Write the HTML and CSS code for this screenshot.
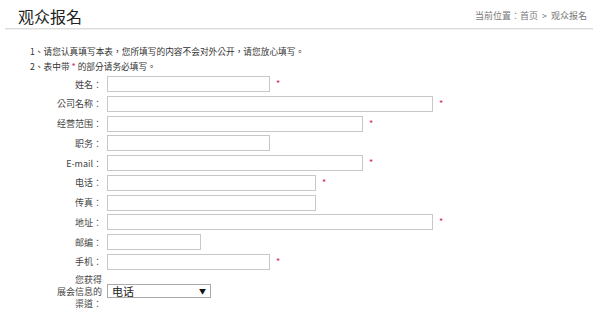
FILE: index.html
```html
<!DOCTYPE html>
<html>
<head>
    <meta charset="UTF-8">
    <title>观众报名</title>
    <link rel="stylesheet" href="styles.css">
</head>
<body>
    <div class="head">
        <h1>观众报名</h1>
        <div class="crumb">当前位置：首页 &gt; 观众报名</div>
    </div>
    <div class="main">
        <p class="note">1、请您认真填写本表，您所填写的内容不会对外公开，请您放心填写。</p>
        <p class="note">2、表中带 <span class="star">*</span> 的部分请务必填写。</p>

        <form class="reg">
            <div class="row">
                <label>姓名：</label>
                <input type="text" class="w163">
                <span class="star">*</span>
            </div>
            <div class="row">
                <label>公司名称：</label>
                <input type="text" class="w326">
                <span class="star">*</span>
            </div>
            <div class="row">
                <label>经营范围：</label>
                <input type="text" class="w256">
                <span class="star">*</span>
            </div>
            <div class="row">
                <label>职务：</label>
                <input type="text" class="w163">
            </div>
            <div class="row">
                <label>E-mail：</label>
                <input type="text" class="w256">
                <span class="star">*</span>
            </div>
            <div class="row">
                <label>电话：</label>
                <input type="text" class="w209">
                <span class="star">*</span>
            </div>
            <div class="row">
                <label>传真：</label>
                <input type="text" class="w209">
            </div>
            <div class="row">
                <label>地址：</label>
                <input type="text" class="w326">
                <span class="star">*</span>
            </div>
            <div class="row">
                <label>邮编：</label>
                <input type="text" class="w94">
            </div>
            <div class="row">
                <label>手机：</label>
                <input type="text" class="w163">
                <span class="star">*</span>
            </div>
            <div class="row">
                <label class="multi">您获得<br>展会信息的<br>渠道：</label>
                <span class="pick">
                    <select>
                        <option>电话</option>
                        <option>网站</option>
                        <option>朋友介绍</option>
                    </select>
                </span>
            </div>
        </form>
    </div>
</body>
</html>
```

FILE: styles.css
```css
body {
    margin: 0;
    background: #fff;
    color: #333;
    font-family: "Noto Sans CJK TC", "Noto Sans CJK SC", sans-serif;
    font-size: 9px;
}

.head {
    margin: 0 7px 0 5px;
    height: 24px;
    padding: 4px 6px 0 13px;
    display: flex;
    justify-content: space-between;
    align-items: center;
    border-bottom: 1px solid #dcdcdc;
    box-shadow: 0 1px 0 #f0f0f0;
}

.head h1 {
    margin: 0;
    font-size: 16px;
    font-weight: normal;
    color: #222;
    line-height: 24px;
}

.crumb {
    color: #777;
    font-size: 9px;
    margin-top: -2px;
    word-spacing: 2px;
}

.main {
    padding: 15px 0 0 30px;
}

.note {
    margin: 0;
    line-height: 15px;
    font-size: 8.7px;
}

.star {
    color: #d0245a;
    font-size: 9px;
}

.reg {
    margin: 2px 0 0 27px;
}

.row {
    display: flex;
    align-items: center;
    margin-bottom: 3.75px;
}

.row label {
    width: 45px;
    margin-right: 5px;
    text-align: right;
    color: #444;
    white-space: nowrap;
}

.row label.multi {
    white-space: normal;
    line-height: 12px;
}

.row input {
    box-sizing: border-box;
    height: 16px;
    margin: 0;
    padding: 0 3px;
    border: 1px solid #c8c8c8;
    outline: none;
}

.row .star {
    margin-left: 6px;
    margin-top: -1px;
}

.w94 { width: 94px; }
.w163 { width: 163px; }
.w209 { width: 209px; }
.w256 { width: 256px; }
.w326 { width: 326px; }

.pick {
    position: relative;
    display: inline-block;
}

.pick select {
    appearance: none;
    -webkit-appearance: none;
    box-sizing: border-box;
    width: 104px;
    height: 14px;
    margin: 0;
    padding: 0 0 0 4px;
    border: 1px solid #a9a9a9;
    border-radius: 0;
    background: #fff;
    color: #222;
    font-family: "Noto Sans CJK TC", "Noto Sans CJK SC", sans-serif;
    font-size: 11px;
    line-height: 12px;
}

.pick::after {
    content: "▼";
    position: absolute;
    right: 5px;
    top: 2px;
    font-size: 7px;
    color: #111;
    pointer-events: none;
}
```
